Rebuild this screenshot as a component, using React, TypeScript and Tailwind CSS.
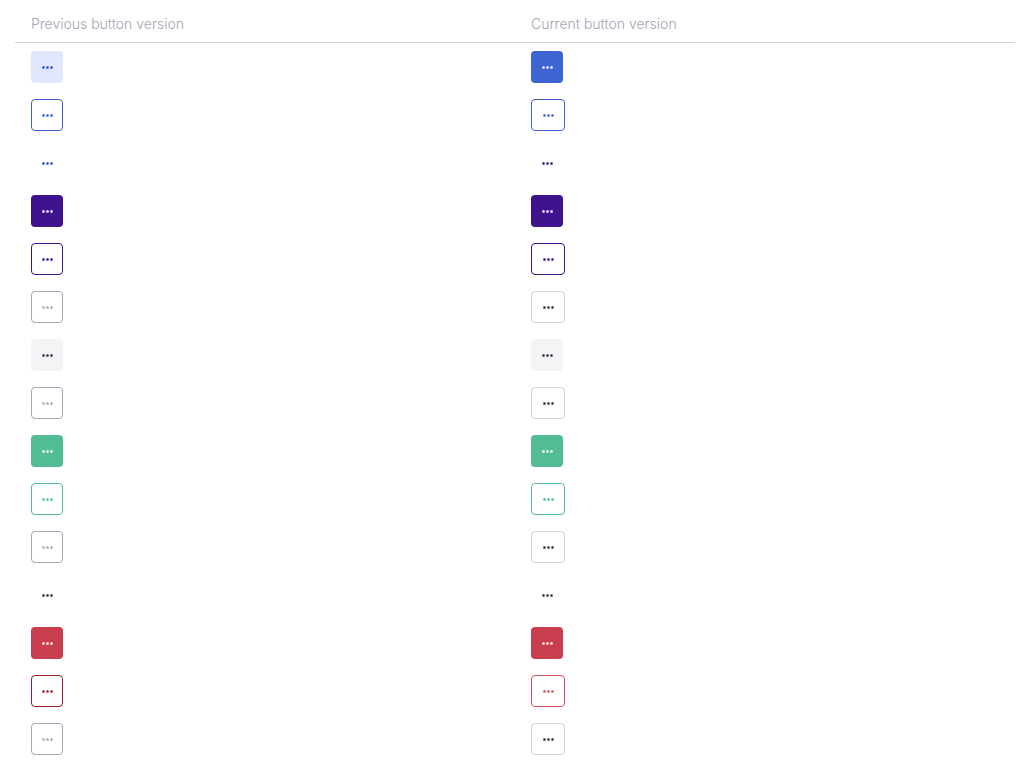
import React from "react";

type Variant = {
  cls: string;
  dot: string;
};

// left column: previous styles, right column: current styles
const rows: [Variant, Variant][] = [
  [
    { cls: "w-8 bg-[#e1e8fd]", dot: "#2f4fc7" },
    { cls: "w-8 bg-[#3e63d2]", dot: "#ffffff" },
  ],
  [
    { cls: "w-8 border border-[#3e5fcf] bg-white", dot: "#3358d4" },
    { cls: "w-[34px] border border-[#3e63d2] bg-white", dot: "#3e63d2" },
  ],
  [
    { cls: "w-8", dot: "#2a47b8" },
    { cls: "w-8", dot: "#2c1a6e" },
  ],
  [
    { cls: "w-8 bg-[#3f138d]", dot: "#ffffff" },
    { cls: "w-8 bg-[#3f138d]", dot: "#ffffff" },
  ],
  [
    { cls: "w-8 border border-[#3f138d] bg-white", dot: "#3f138d" },
    { cls: "w-[34px] border border-[#3f138d] bg-white", dot: "#3f138d" },
  ],
  [
    { cls: "w-8 border border-[#a5a7b8] bg-white", dot: "#a5a7b8" },
    { cls: "w-[34px] border border-[#d1d5e3] bg-white", dot: "#2d3142" },
  ],
  [
    { cls: "w-8 bg-[#f3f4f6]", dot: "#2d3142" },
    { cls: "w-8 bg-[#f3f4f6]", dot: "#2d3142" },
  ],
  [
    { cls: "w-8 border border-[#a5a7b8] bg-white", dot: "#a5a7b8" },
    { cls: "w-[34px] border border-[#d1d5e3] bg-white", dot: "#2d3142" },
  ],
  [
    { cls: "w-8 bg-[#52bd94]", dot: "#ffffff" },
    { cls: "w-8 bg-[#52bd94]", dot: "#ffffff" },
  ],
  [
    { cls: "w-8 border border-[#52bd94] bg-white", dot: "#52bd94" },
    { cls: "w-[34px] border border-[#52bd94] bg-white", dot: "#52bd94" },
  ],
  [
    { cls: "w-8 border border-[#a5a7b8] bg-white", dot: "#a5a7b8" },
    { cls: "w-[34px] border border-[#d1d5e3] bg-white", dot: "#2d3142" },
  ],
  [
    { cls: "w-8", dot: "#2d3142" },
    { cls: "w-8", dot: "#2d3142" },
  ],
  [
    { cls: "w-8 bg-[#c93e4e]", dot: "#ffffff" },
    { cls: "w-8 bg-[#c93e4e]", dot: "#ffffff" },
  ],
  [
    { cls: "w-8 border border-[#9b1c2c] bg-white", dot: "#9b1c2c" },
    { cls: "w-[34px] border border-[#d14d5c] bg-white", dot: "#d14d5c" },
  ],
  [
    { cls: "w-8 border border-[#a5a7b8] bg-white", dot: "#a5a7b8" },
    { cls: "w-[34px] border border-[#d1d5e3] bg-white", dot: "#2d3142" },
  ],
];

function Dots({ color }: { color: string }) {
  return (
    <svg width="11" height="3" viewBox="0 0 11 3" fill={color}>
      <rect x="0.3" y="0.3" width="2.4" height="2.4" rx="0.6" />
      <rect x="4.3" y="0.3" width="2.4" height="2.4" rx="0.6" />
      <rect x="8.3" y="0.3" width="2.4" height="2.4" rx="0.6" />
    </svg>
  );
}

function MoreButton({ v }: { v: Variant }) {
  return (
    <button className={`flex h-8 items-center justify-center rounded ${v.cls}`}>
      <Dots color={v.dot} />
    </button>
  );
}

export default function App() {
  return (
    <div className="min-h-screen bg-white pl-[15px] pr-2 font-['Inter','Liberation_Sans',sans-serif]">
      <div className="grid grid-cols-2 border-b border-[#d0d4df] pt-[14px] pb-2 text-sm font-light text-[#a1a5b5]">
        <div className="pl-4 leading-5">Previous button version</div>
        <div className="pl-4 leading-5">Current button version</div>
      </div>
      {rows.map(([prev, cur], i) => (
        <div key={i} className="grid grid-cols-2 py-2">
          <div className="pl-4">
            <MoreButton v={prev} />
          </div>
          <div className="pl-4">
            <MoreButton v={cur} />
          </div>
        </div>
      ))}
    </div>
  );
}
